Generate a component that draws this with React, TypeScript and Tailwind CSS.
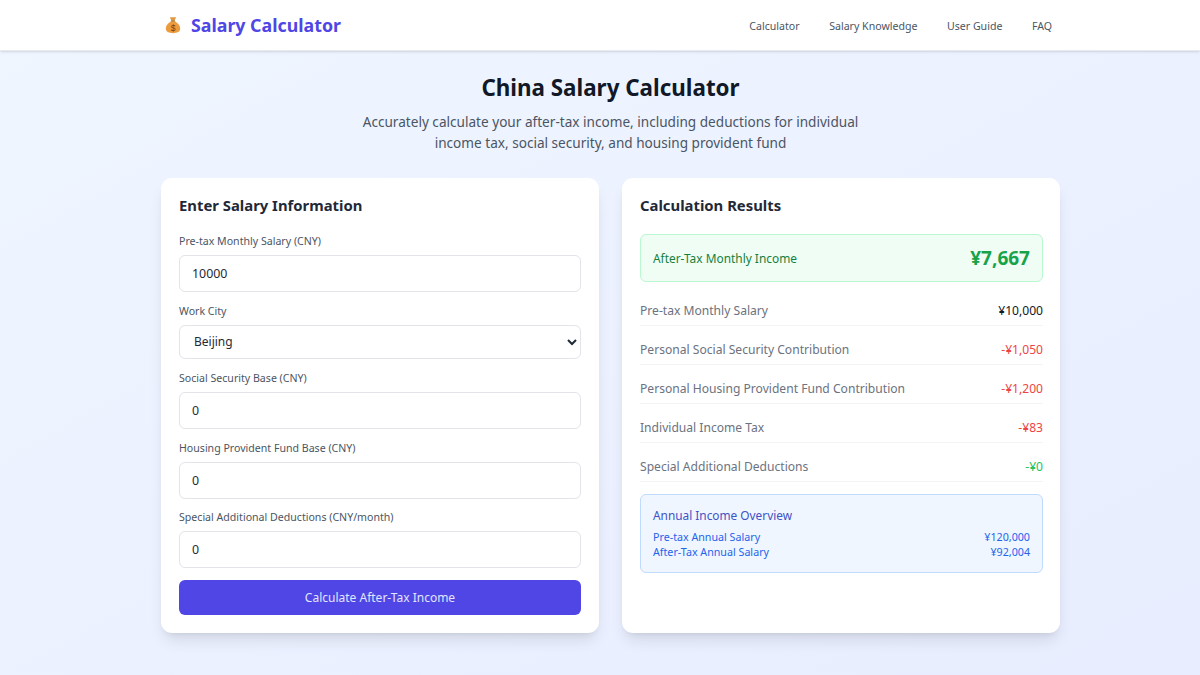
const font = { fontFamily: '"Noto Sans", "Liberation Sans", sans-serif' };

function Field({ label, value, mb = "mb-[11.5px]" }: { label: string; value: string; mb?: string }) {
  return (
    <div className={mb}>
      <label className="block text-[10.6px] leading-[14px] text-[#4b5563] mb-[7px]">{label}</label>
      <input
        readOnly
        value={value}
        className="block w-full h-[37px] rounded-[6px] border border-[#e2e4ea] bg-white px-3 text-[12.4px] text-[#1f2937] outline-none"
      />
    </div>
  );
}

function Row({ label, value, color }: { label: string; value: string; color: string }) {
  return (
    <div className="flex items-center justify-between h-[39px] pt-[10px] border-b border-[#f3f4f6] text-[12.1px]">
      <span className="text-[#6b7280]">{label}</span>
      <span className={color}>{value}</span>
    </div>
  );
}

export default function App() {
  return (
    <div style={font} className="h-[675px] overflow-hidden bg-gradient-to-br from-[#eff6ff] to-[#e8edff]">
      <header className="h-[51px] bg-white border-b border-[#e8ebf0] shadow-sm">
        <div className="ml-[161px] w-[899px] h-full flex items-center justify-between pl-[3px] pr-[8px]">
          <div className="flex items-center gap-[9px]">
            <svg width="18" height="18" viewBox="0 0 18 18">
              <path d="M5.8 1.2 L12.2 1.2 L10.6 4.6 L7.4 4.6 Z" fill="#e0983f" />
              <rect x="6.8" y="4.4" width="4.4" height="1.4" rx="0.5" fill="#8a5520" />
              <path d="M7 5.6 L11 5.6 C14.5 7.5 16.2 10 16.2 12.6 C16.2 16 13 17.2 9 17.2 C5 17.2 1.8 16 1.8 12.6 C1.8 10 3.5 7.5 7 5.6 Z" fill="#ec9b3f" />
              <text x="9" y="15" textAnchor="middle" fontSize="8.5" fill="#6d4318" fontFamily="Liberation Sans">$</text>
            </svg>
            <span className="text-[17.8px] font-bold text-[#4f46e5]">Salary Calculator</span>
          </div>
          <nav className="flex items-center gap-[29.5px] pt-[3px] text-[10.6px] text-[#4b5563]">
            <span>Calculator</span>
            <span>Salary Knowledge</span>
            <span>User Guide</span>
            <span>FAQ</span>
          </nav>
        </div>
      </header>

      <main className="ml-[161px] w-[899px]">
        <div className="text-center pt-[21px] h-[127px]">
          <h1 className="text-[22.4px] leading-[32px] font-bold text-[#111827]">China Salary Calculator</h1>
          <p className="mt-[7px] text-[13.6px] leading-[21px] text-[#4b5563]">
            Accurately calculate your after-tax income, including deductions for individual
            <br />
            income tax, social security, and housing provident fund
          </p>
        </div>

        <div className="flex gap-[23px]">
          <section className="w-[438px] h-[455px] rounded-[11px] bg-white shadow-lg p-[18px]">
            <h2 className="text-[14.85px] leading-[20px] -mt-px font-bold text-[#1f2937] mb-[19px]">Enter Salary Information</h2>
            <Field label="Pre-tax Monthly Salary (CNY)" value="10000" />
            <div className="mb-[12.5px]">
              <label className="block text-[10.6px] leading-[14px] text-[#4b5563] mb-[7px]">Work City</label>
              <select className="block w-full h-[34px] rounded-[6px] border border-[#e2e4ea] bg-white px-[10px] text-[12px] text-[#1f2937] outline-none">
                <option>Beijing</option>
              </select>
            </div>
            <Field label="Social Security Base (CNY)" value="0" />
            <Field label="Housing Provident Fund Base (CNY)" value="0" />
            <Field label="Special Additional Deductions (CNY/month)" value="0" mb="mb-[11.5px]" />
            <button className="block w-full h-[35px] rounded-[6px] bg-[#4f46e5] pt-px text-[12px] text-[#e0e7ff]">
              Calculate After-Tax Income
            </button>
          </section>

          <section className="w-[438px] h-[455px] rounded-[11px] bg-white shadow-lg pt-[18px] pb-[18px] pl-[18px] pr-[17px]">
            <h2 className="text-[14.85px] leading-[20px] -mt-px font-bold text-[#1f2937] mb-[19px]">Calculation Results</h2>
            <div className="flex items-center justify-between h-[48px] rounded-[6px] border border-[#bbf7d0] bg-[#f0fdf4] px-3 mb-[5px]">
              <span className="text-[11.9px] pt-px text-[#15803d]">After-Tax Monthly Income</span>
              <span className="text-[19px] font-bold text-[#16a34a]">¥7,667</span>
            </div>
            <Row label="Pre-tax Monthly Salary" value="¥10,000" color="text-[#111827]" />
            <Row label="Personal Social Security Contribution" value="-¥1,050" color="text-[#ef4444]" />
            <Row label="Personal Housing Provident Fund Contribution" value="-¥1,200" color="text-[#ef4444]" />
            <Row label="Individual Income Tax" value="-¥83" color="text-[#ef4444]" />
            <Row label="Special Additional Deductions" value="-¥0" color="text-[#22c55e]" />
            <div className="mt-[12px] h-[79px] rounded-[6px] border border-[#bfdbfe] bg-[#eff6ff] px-3 pt-[11px]">
              <div className="text-[11.85px] leading-[18px] text-[#3f51c5] mb-[6px]">Annual Income Overview</div>
              <div className="flex justify-between text-[10.7px] leading-[15px] text-[#2563eb]">
                <span>Pre-tax Annual Salary</span>
                <span>¥120,000</span>
              </div>
              <div className="flex justify-between text-[10.7px] leading-[15px] text-[#2563eb]">
                <span>After-Tax Annual Salary</span>
                <span>¥92,004</span>
              </div>
            </div>
          </section>
        </div>
      </main>
    </div>
  );
}
